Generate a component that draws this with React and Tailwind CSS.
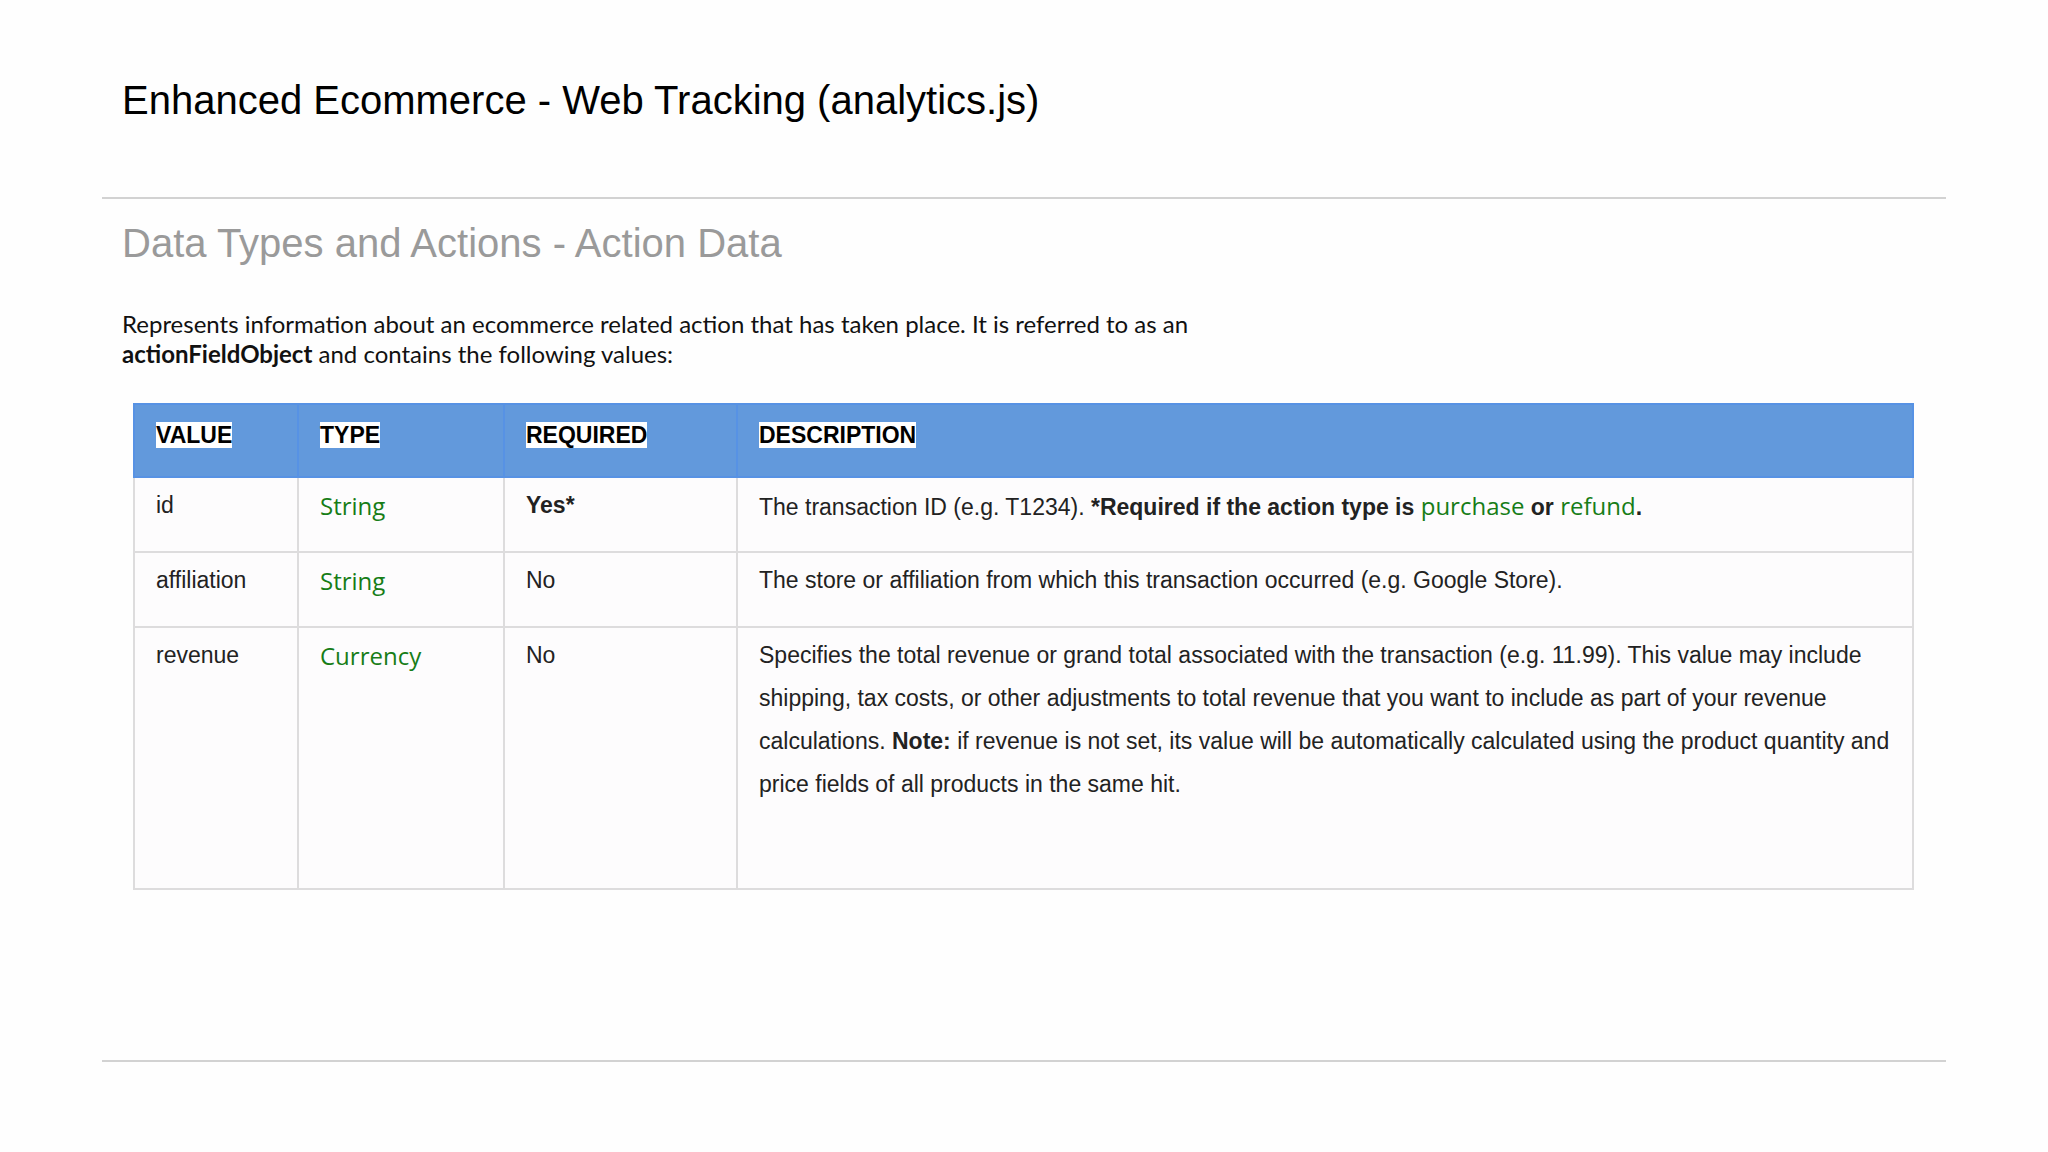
const Code = ({ children }) => (
  <span className="font-['Open_Sans',sans-serif] text-[24px] text-[#177d17]">{children}</span>
);

const headers = ["VALUE", "TYPE", "REQUIRED", "DESCRIPTION"];

export default function App() {
  return (
    <div className="w-[2048px] h-[1152px] bg-[#fefefe] font-['Liberation_Sans',Arial,sans-serif] overflow-hidden">
      <div className="px-[102px]">
        <h1 className="pt-[80px] pl-[20px] text-[40px] leading-[40px] text-black">
          Enhanced Ecommerce - Web Tracking (analytics.js)
        </h1>
        <div className="mt-[77px] h-[2px] bg-[#d2d2d2]" />
        <h2 className="mt-[24px] pl-[20px] text-[40px] leading-[40px] text-[#9a9a9a]">
          Data Types and Actions - Action Data
        </h2>
        <p className="mt-[46px] pl-[20px] font-['Lato',sans-serif] text-[24px] leading-[30px] text-[#111]">
          Represents information about an ecommerce related action that has taken place. It is referred to as an
          <br />
          <b>actionFieldObject</b> and contains the following values:
        </p>

        <div className="mt-[34px] ml-[31px] w-[1781px] grid grid-cols-[166px_206px_233px_1fr] text-[23px] text-[#222]">
          {headers.map((h, i) => (
            <div
              key={h}
              className={`h-[75px] bg-[#6299dc] border-t-2 border-b-2 border-[#5792e4] pt-[17px] pl-[21px] leading-[26px] ${
                i === 0 ? "border-l-2" : ""
              } border-r-2`}
            >
              <span className="bg-white font-bold text-black">{h}</span>
            </div>
          ))}

          <Cell first>id</Cell>
          <Cell><Code>String</Code></Cell>
          <Cell><b>Yes*</b></Cell>
          <Cell>
            The transaction ID (e.g. T1234). <b>*Required if the action type is </b>
            <Code>purchase</Code>
            <b> or </b>
            <Code>refund</Code>
            <b>.</b>
          </Cell>

          <Cell first>affiliation</Cell>
          <Cell><Code>String</Code></Cell>
          <Cell>No</Cell>
          <Cell>The store or affiliation from which this transaction occurred (e.g. Google Store).</Cell>

          <Cell first tall>revenue</Cell>
          <Cell tall><Code>Currency</Code></Cell>
          <Cell tall>No</Cell>
          <Cell tall>
            Specifies the total revenue or grand total associated with the transaction (e.g. 11.99). This value may include
            <br />
            shipping, tax costs, or other adjustments to total revenue that you want to include as part of your revenue
            <br />
            calculations. <b>Note:</b> if revenue is not set, its value will be automatically calculated using the product quantity and
            <br />
            price fields of all products in the same hit.
          </Cell>
        </div>

        <div className="mt-[170px] h-[2px] bg-[#d2d2d2]" />
      </div>
    </div>
  );
}

function Cell({ children, first, tall }) {
  return (
    <div
      className={`${tall ? "h-[262px]" : "h-[75px]"} bg-[#fdfcfd] border-r-2 border-b-2 border-[#dddcdd] ${
        first ? "border-l-2" : ""
      } pt-[6px] pl-[21px] leading-[43px] whitespace-nowrap`}
    >
      {children}
    </div>
  );
}
